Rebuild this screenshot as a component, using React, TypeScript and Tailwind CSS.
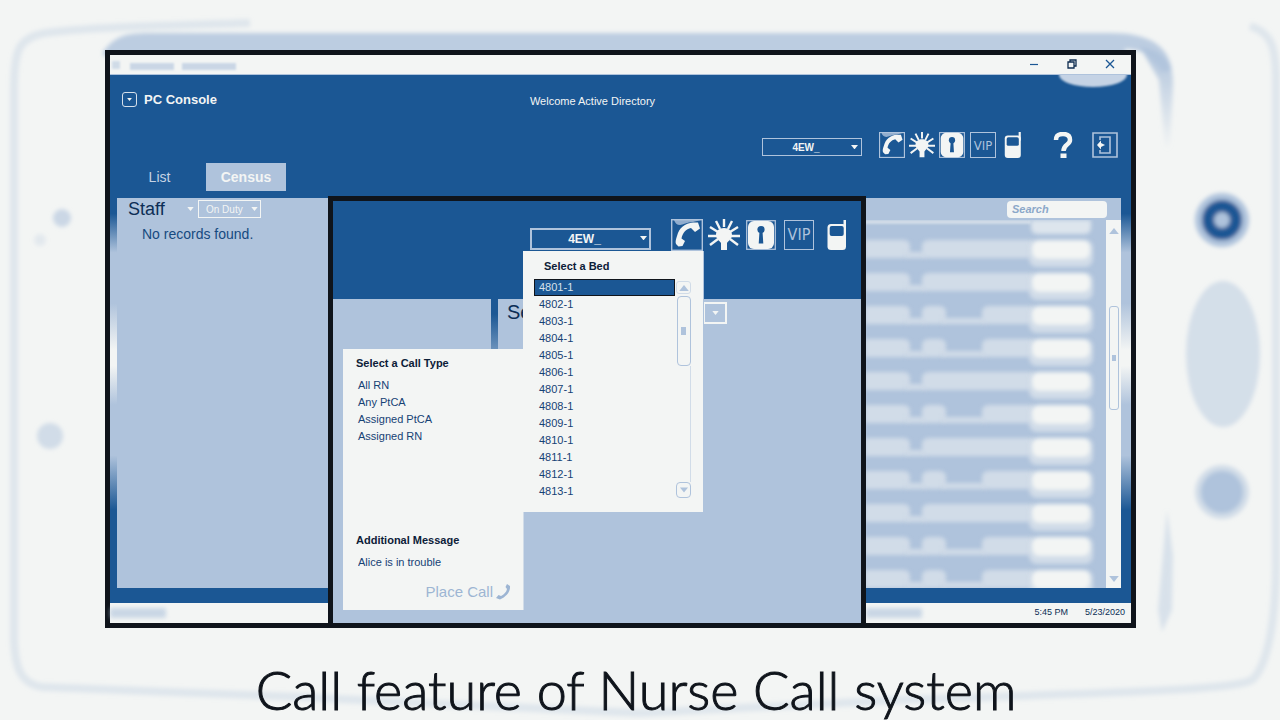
import type { ReactNode } from "react";

const beds = Array.from({ length: 13 }, (_, i) => `${4801 + i}-1`);
const callTypes = ["All RN", "Any PtCA", "Assigned PtCA", "Assigned RN"];
const maskedRows = ["none", "full", "full", "mid", "mid", "full", "mid", "full", "mid", "full", "mid", "mid"];

function Caret({ className }: { className: string }) {
  return (
    <svg viewBox="0 0 8 5" className={className} aria-hidden="true">
      <path d="M0 0H8L4 5Z" fill="currentColor" />
    </svg>
  );
}

function PhoneIcon({ className }: { className: string }) {
  return (
    <svg viewBox="0 0 32 32" className={className} aria-hidden="true">
      <rect x="0.7" y="0.7" width="30.6" height="30.6" fill="none" stroke="#afc3dc" strokeWidth="1.4" />
      <path d="M3 1H30L22 3C16 3 12 6 9 6C6 6 4 4 3 1Z" fill="#afc3dc" fillOpacity="0.8" />
      <path
        d="M5 25C4 23 5 20 6 17C8 9 14 4 22 3.500L27 3.500L29 9.500L24 13L20 9C15 10 11.500 14 10.500 19.500L14 22L11.500 27L7.500 27.500Z"
        fill="#f3f5f4"
      />
    </svg>
  );
}

function BulbIcon({ className }: { className: string }) {
  return (
    <svg viewBox="0 0 32 32" className={className} aria-hidden="true">
      <path
        d="M16 0V8M8 2L12 10M24 2L20 10M2 8L10 13M30 8L22 13M0 17H9M32 17H23M2 26L10 20M30 26L22 20"
        stroke="#f3f5f4"
        strokeWidth="2.400"
      />
      <path d="M16 9C11 9 8 12 8 16C8 20 12 22 13 24V31H19V24C20 22 24 20 24 16C24 12 21 9 16 9Z" fill="#f3f5f4" />
    </svg>
  );
}

function LockIcon({ className }: { className: string }) {
  return (
    <svg viewBox="0 0 30 30" className={className} aria-hidden="true">
      <rect x="0.7" y="0.7" width="28.6" height="28.6" fill="#1b5794" stroke="#afc3dc" strokeWidth="1.3" />
      <rect x="2" y="1" width="26" height="28" rx="6" fill="#f3f5f4" />
      <circle cx="15" cy="9.500" r="3.600" fill="#1b5794" />
      <path d="M13.500 11H16.500L17.300 23.500H12.700Z" fill="#1b5794" />
    </svg>
  );
}

function DeviceIcon({ className }: { className: string }) {
  return (
    <svg viewBox="0 0 20 30" className={className} aria-hidden="true">
      <path d="M16.500 0H19V10H16.500Z" fill="#f3f5f4" />
      <rect x="0.500" y="4" width="18.500" height="26" rx="3.500" fill="#f3f5f4" />
      <rect x="2.700" y="6" width="14" height="10" rx="2" fill="#1b5794" />
    </svg>
  );
}

function CallToolbar({ large }: { large?: boolean }) {
  const box = large ? "h-8 w-8" : "h-[26px] w-[26px]";
  const inner = large ? "h-[30px] w-[30px]" : "h-[26px] w-[26px]";
  return (
    <div className={large ? "flex items-center gap-[5px]" : "flex items-center gap-1"}>
      <button aria-label="Call"><PhoneIcon className={box} /></button>
      <button aria-label="Alert"><BulbIcon className={box} /></button>
      <button aria-label="Lock" className={large ? "ml-px" : ""}><LockIcon className={inner} /></button>
      <button
        className={`flex items-center justify-center border border-[#afc3dc] font-['DejaVu_Sans_Condensed','DejaVu_Sans',sans-serif] leading-none text-[#afc3dc] ${
          large ? "ml-[3px] h-[30px] w-[30px] text-[16px]" : "ml-px h-[26px] w-[26px] text-[13px]"
        }`}
      >
        VIP
      </button>
      <button aria-label="Device" className={large ? "ml-2" : "ml-1"}>
        <DeviceIcon className={large ? "h-[30px] w-5" : "h-[26px] w-[18px]"} />
      </button>
    </div>
  );
}

function UnitSelect({ large }: { large?: boolean }) {
  return (
    <div className={`relative text-[#f3f5f4] ${large ? "w-[121px]" : "w-[100px]"}`}>
      <select
        aria-label="Unit"
        className={`block w-full appearance-none bg-transparent pr-3 text-center font-bold outline-none ${
          large ? "h-[22px] border-2 border-[#afc3dc] text-[12px]" : "h-[18px] border border-[#afc3dc] text-[10px]"
        }`}
      >
        <option>4EW_</option>
      </select>
      <Caret className={`pointer-events-none absolute right-1 w-[7px] ${large ? "top-2" : "top-[7px]"}`} />
    </div>
  );
}

function Backdrop() {
  return (
    <svg
      viewBox="0 0 1280 720"
      preserveAspectRatio="none"
      className="pointer-events-none absolute inset-0 h-full w-full"
      aria-hidden="true"
    >
      <defs>
        <filter id="soft" x="-20%" y="-20%" width="140%" height="140%">
          <feGaussianBlur stdDeviation="2" />
        </filter>
        <linearGradient id="edge" x1="0" y1="0" x2="0" y2="1">
          <stop offset="0" stopColor="#afc3dc" />
          <stop offset="1" stopColor="#afc3dc" stopOpacity="0" />
        </linearGradient>
      </defs>
      <g filter="url(#soft)">
        <g fill="none" stroke="#afc3dc" strokeOpacity="0.3">
          <path d="M250 23C160 26 90 27 45 33C18 38 14 50 14 90V640C15 670 22 684 42 687L300 697L440 704L640 713" strokeWidth="8" />
          <path d="M1250 26C1270 32 1276 45 1276 80V560C1276 620 1268 665 1252 680C1235 690 1130 692 900 700L640 713" strokeWidth="8" />
        </g>
        <path d="M103 52C115 36 125 33 150 33H1110C1150 33 1168 46 1172 70L1162 72C1150 52 1140 50 1125 49V56H103Z" fill="#afc3dc" fillOpacity="0.8" />
        <path d="M1140 47C1158 50 1174 58 1173 85L1170 150L1165 150L1159 80Z" fill="url(#edge)" />
        <path d="M1167 510L1173 555L1172 610L1162 632L1158 610Z" fill="#afc3dc" fillOpacity="0.4" />
        <circle cx="62" cy="218" r="9" fill="#afc3dc" fillOpacity="0.6" />
        <circle cx="40" cy="240" r="6" fill="#afc3dc" fillOpacity="0.25" />
        <circle cx="50" cy="436" r="13" fill="#afc3dc" fillOpacity="0.5" />
        <ellipse cx="1223" cy="354" rx="37" ry="73" fill="#afc3dc" fillOpacity="0.45" />
        <circle cx="1222" cy="220" r="27" fill="#afc3dc" />
        <circle cx="1222" cy="220" r="14" fill="none" stroke="#1b5794" strokeWidth="12" />
        <circle cx="1222" cy="220" r="6" fill="#afc3dc" />
        <circle cx="1222" cy="492" r="27" fill="#afc3dc" fillOpacity="0.5" />
        <circle cx="1222" cy="492" r="21" fill="#afc3dc" />
      </g>
    </svg>
  );
}

function TitleBar() {
  return (
    <div className="flex h-5 shrink-0 items-center border-b border-[#afc3dc] bg-[#f3f5f4]">
      <div className="ml-0.5 h-2 w-2 bg-[#afc3dc] opacity-50 blur-[1px]" />
      <div className="mt-1 ml-2.5 h-[7px] w-11 bg-[#afc3dc] opacity-60 blur-[1px]" />
      <div className="mt-1 ml-2 h-[7px] w-[54px] bg-[#afc3dc] opacity-60 blur-[1px]" />
      <div className="ml-auto flex gap-7 pr-4 pb-px text-[#1b5794]">
        <button aria-label="Minimize">
          <svg viewBox="0 0 10 10" className="h-2.5 w-2.5"><path d="M1 5.500H9" stroke="currentColor" strokeWidth="1.200" /></svg>
        </button>
        <button aria-label="Restore">
          <svg viewBox="0 0 10 10" className="h-2.5 w-2.5" fill="none" stroke="#0f2c50" strokeWidth="1.300">
            <path d="M1 3H7V9H1ZM3 3V1H9V7H7" />
          </svg>
        </button>
        <button aria-label="Close">
          <svg viewBox="0 0 10 10" className="h-2.5 w-2.5"><path d="M1 1L9 9M9 1L1 9" stroke="currentColor" strokeWidth="1.300" /></svg>
        </button>
      </div>
    </div>
  );
}

function Header() {
  return (
    <header className="relative h-[123px] shrink-0 overflow-hidden text-[#f3f5f4]">
      <div className="absolute -top-3 right-1 h-6 w-[68px] rounded-[50%] bg-[#c5d3e5] blur-[1px]" />
      <div className="grid grid-cols-3 px-3 pt-[15px]">
        <div className="flex items-center gap-[7px]">
          <button aria-label="Menu" className="flex h-[15px] w-[15px] items-center justify-center rounded-[3px] border border-[#d6e0eb]">
            <Caret className="h-[3px] w-[5px]" />
          </button>
          <h1 className="text-[13px] leading-4 font-bold">PC Console</h1>
        </div>
        <p className="pt-[3px] pr-14 text-center text-[11px] leading-4 whitespace-nowrap">Welcome Active Directory</p>
      </div>
      <div className="flex items-center justify-end pt-[23px] pr-[13px]">
        <div className="mr-[17px] pt-1"><UnitSelect /></div>
        <CallToolbar />
        <button aria-label="Help" className="ml-[31px]">
          <svg viewBox="0 0 20 26" className="h-[26px] w-5" aria-hidden="true">
            <path d="M3 8C3 3 6 2 10 2C15 2 17 4.500 17 8C17 13 10.500 12 10.500 19" fill="none" stroke="#f3f5f4" strokeWidth="4.500" />
            <rect x="7.500" y="21.500" width="6" height="4.500" fill="#f3f5f4" />
          </svg>
        </button>
        <button aria-label="Log out" className="ml-[19px]">
          <svg viewBox="0 0 26 26" className="h-[26px] w-[26px]" aria-hidden="true">
            <path d="M1 1H25V25H1ZM8 8V5H18V21H8V18" fill="none" stroke="#afc3dc" strokeWidth="1.600" />
            <path d="M5 13L9 8.500V11L13 13L9 15V17.500Z" fill="#f3f5f4" />
          </svg>
        </button>
      </div>
      <nav className="flex items-center pt-[5px] text-[14px]">
        <button className="ml-[7px] h-7 w-[85px] text-[#c5d3e5]">List</button>
        <button className="ml-1 h-7 w-20 bg-[#afc3dc] font-bold">Census</button>
      </nav>
    </header>
  );
}

function StaffPanel() {
  return (
    <section className="w-[240px] shrink-0 bg-[#afc3dc]">
      <div className="flex h-[22px] items-center pl-[11px]">
        <h2 className="w-[59px] text-[18px] leading-5 text-[#0c2e55]">Staff</h2>
        <Caret className="h-1 w-[7px] text-[#f3f5f4]" />
        <div className="relative ml-1 w-[63px] text-[#f3f5f4]">
          <select aria-label="Duty status" className="block h-[18px] w-full appearance-none border border-[#f3f5f4] bg-transparent pl-[7px] text-[10px] outline-none">
            <option>On Duty</option>
          </select>
          <Caret className="pointer-events-none absolute top-[7px] right-[3px] h-1 w-[7px]" />
        </div>
      </div>
      <p className="pt-1 pl-[25px] text-[14px] leading-5 text-[#164a80]">No records found.</p>
    </section>
  );
}

function MaskedRow({ kind }: { kind: string }) {
  return (
    <div className="flex h-[33px] shrink-0 items-start">
      <div className="h-[18px] w-[45px] rounded-r-[6px] bg-[#d1dce8] blur-[2px]" />
      <div className="mt-3 -ml-1 h-1.5 w-5 bg-[#d1dce8] blur-[2px]" />
      {kind === "mid" && (
        <>
          <div className="-ml-1 h-[18px] w-6 rounded-[6px] bg-[#d1dce8] blur-[2px]" />
          <div className="mt-3 -ml-1 h-1.5 w-11 bg-[#d1dce8] blur-[2px]" />
        </>
      )}
      <div className="-ml-1 h-[18px] flex-1 rounded-l-[6px] bg-[#d1dce8] blur-[2px]" />
      <div className="mr-[13px] -ml-1 h-[27px] w-16 rounded-[8px] bg-[#d1dce8] blur-[2px]">
        <div className="mx-auto h-[19px] w-[58px] rounded-[7px] bg-[#f3f5f4]" />
      </div>
    </div>
  );
}

function ScrollBar({ children }: { children?: ReactNode }) {
  return <div className="flex w-[15px] shrink-0 flex-col items-center bg-[#f3f5f4] text-[#afc3dc]">{children}</div>;
}

function SearchPanel() {
  return (
    <section className="flex w-[256px] shrink-0 flex-col bg-[#afc3dc]">
      <div className="flex h-[22px] shrink-0 items-center justify-end pr-[14px]">
        <input
          type="search"
          aria-label="Search"
          placeholder="Search"
          className="h-[17px] w-[100px] rounded-[4px] bg-[#f3f5f4] px-[5px] text-[11px] font-bold italic outline-none placeholder:text-[#8ca8c9]"
        />
      </div>
      <div className="flex min-h-0 flex-1">
        <div className="flex min-w-0 flex-1 flex-col overflow-hidden">
          <div className="flex flex-col">
            {maskedRows.map((kind, i) =>
              i === 0 ? (
                <div key={i} className="flex h-5 shrink-0 items-start">
                  <div className="h-1 flex-1 bg-[#d1dce8] blur-[1px]" />
                  <div className="mr-[15px] h-3.5 w-[60px] rounded-b-[6px] bg-[#dde5ed] blur-[2px]" />
                </div>
              ) : (
                <MaskedRow key={i} kind={kind} />
              ),
            )}
          </div>
        </div>
        <ScrollBar>
          <Caret className="mt-2 h-1.5 w-2.5 rotate-180" />
          <div className="mt-[72px] flex h-[104px] w-2.5 items-center justify-center rounded-[3px] border border-[#afc3dc]">
            <div className="h-1.5 w-1 bg-[#afc3dc]" />
          </div>
          <Caret className="mt-auto mb-1.5 h-1.5 w-2.5" />
        </ScrollBar>
      </div>
    </section>
  );
}

function BedPopup() {
  return (
    <section className="absolute top-[50px] left-[190px] h-[261px] w-[181px] border-r border-[#afc3dc] bg-[#f3f5f4] pt-[7px] text-[11px]">
      <h3 className="pl-[21px] leading-4 font-bold text-[#0c2038]">Select a Bed</h3>
      <div className="flex pt-[5px] pl-[11px]">
        <ul role="listbox" aria-label="Bed" className="w-[141px] leading-[17px] text-[#164275]">
          {beds.map((bed, i) => (
            <li
              key={bed}
              role="option"
              aria-selected={i === 0}
              className={i === 0 ? "bg-[#1b5794] pl-[5px] text-[#d6e0eb] outline outline-[#0f141b] -outline-offset-1" : "pl-[5px]"}
            >
              {bed}
            </li>
          ))}
        </ul>
        <div className="flex w-[17px] flex-col items-center text-[#afc3dc]">
          <div className="mt-0.5 flex h-[13px] w-[15px] items-center justify-center rounded-[3px] border border-[#d1dce8]">
            <Caret className="h-1.5 w-2.5 rotate-180" />
          </div>
          <div className="mt-0.5 flex h-[70px] w-3.5 items-center justify-center rounded-[4px] border border-[#afc3dc]">
            <div className="h-2 w-[5px] bg-[#afc3dc]" />
          </div>
          <div className="w-[15px] flex-1 border-r border-[#d1dce8]" />
          <div className="mb-0.5 flex h-4 w-[15px] items-center justify-center rounded-[4px] border border-[#afc3dc]">
            <Caret className="h-1.5 w-2" />
          </div>
        </div>
      </div>
    </section>
  );
}

function CallTypePopup() {
  return (
    <section className="absolute top-[148px] left-[10px] flex h-[261px] w-[181px] flex-col border-r border-[#d1dce8] bg-[#f3f5f4] pt-1.5 pl-[13px] text-[11px] text-[#164275]">
      <h3 className="leading-4 font-bold text-[#0c2038]">Select a Call Type</h3>
      <ul className="pt-1.5 pl-0.5 leading-[17px]">
        {callTypes.map((type) => (
          <li key={type}><button>{type}</button></li>
        ))}
      </ul>
      <label htmlFor="message" className="mt-auto leading-4 font-bold text-[#0c2038]">Additional Message</label>
      <input id="message" defaultValue="Alice is in trouble" className="mt-1.5 h-4 bg-transparent pl-0.5 outline-none" />
      <button className="mt-3 mb-2 flex items-center justify-end gap-0.5 pr-3 text-[15px] leading-5 text-[#9db5d3]">
        Place Call
        <svg viewBox="0 0 16 16" className="h-4 w-4" aria-hidden="true">
          <path d="M12 0L15 2C15.500 8 11 13 5 15.500L1 14L3.500 11L6 12C9 10.500 11.500 8 12 5L10.500 3Z" fill="currentColor" />
        </svg>
      </button>
    </section>
  );
}

function CallDialog() {
  return (
    <div
      role="dialog"
      aria-label="Place a call"
      className="absolute top-[141px] right-[265px] -bottom-[5px] left-[218px] flex flex-col border-[5px] border-[#0f141b] bg-[#1b5794]"
    >
      <div className="flex h-[98px] shrink-0 items-start justify-end pt-[18px] pr-[14px]">
        <div className="mt-[9px] mr-5"><UnitSelect large /></div>
        <CallToolbar large />
      </div>
      <div className="flex flex-1 bg-[linear-gradient(#1b5794_15px,#afc3dc_80px)]">
        <div className="w-[158px] bg-[#afc3dc]" />
        <div className="ml-[7px] flex flex-1 items-start bg-[#afc3dc] pt-[3px] pl-[9px]">
          <h2 className="w-[196px] text-[20px] leading-5 text-[#0c2e55]">Se</h2>
          <button aria-label="Filter" className="flex h-[22px] w-6 items-center justify-center border-2 border-[#f3f5f4] text-[#f3f5f4]">
            <Caret className="h-1 w-[7px]" />
          </button>
        </div>
      </div>
      <CallTypePopup />
      <BedPopup />
    </div>
  );
}

export default function App() {
  return (
    <div className="relative flex h-screen min-h-[720px] flex-col bg-[#f3f5f4] pt-[50px] font-['Liberation_Sans',Arial,sans-serif]">
      <Backdrop />
      <main className="relative mr-[144px] ml-[105px] flex min-h-0 flex-1 flex-col border-[5px] border-[#0f141b] bg-[#1b5794]">
        <TitleBar />
        <Header />
        <div className="flex min-h-0 flex-1 justify-between bg-[linear-gradient(#1b5794_4%,#afc3dc_14%,#afc3dc_27%,#f3f5f4_39%,#f3f5f4_43%,#afc3dc_53%,#afc3dc_66%,#1b5794_80%)] pr-[10px] pl-[7px]">
          <StaffPanel />
          <SearchPanel />
        </div>
        <div className="h-[15px] shrink-0" />
        <footer className="flex h-5 shrink-0 items-center bg-[#f3f5f4] text-[9px] text-[#0c2e55]">
          <div className="h-2.5 w-14 bg-[#afc3dc] opacity-60 blur-[2px]" />
          <div className="ml-auto mr-[112px] h-2.5 w-14 bg-[#afc3dc] opacity-60 blur-[2px]" />
          <time>5:45 PM</time>
          <time className="mr-1.5 ml-[17px]">5/23/2020</time>
        </footer>
        <CallDialog />
      </main>
      <p className="relative h-[92px] shrink-0 pt-[26px] pr-2 text-center font-['Lato',sans-serif] text-[54px] leading-[72px] font-light text-[#0f141b] [-webkit-text-stroke:1px_#0f141b]">
        Call feature of Nurse Call system
      </p>
    </div>
  );
}
